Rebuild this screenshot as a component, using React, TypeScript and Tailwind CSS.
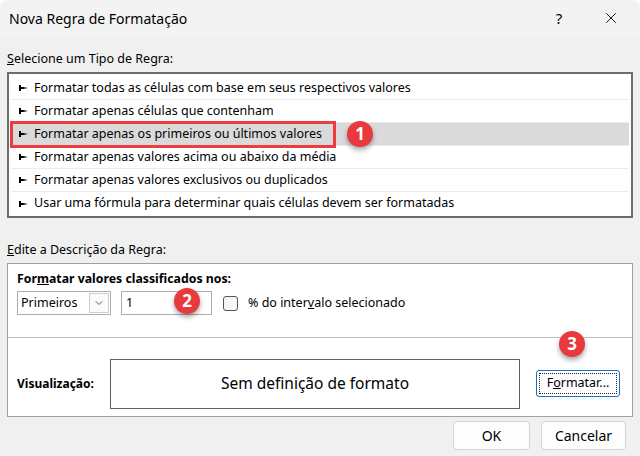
import { ChevronDown, X } from "lucide-react";

const RULES = [
  "Formatar todas as células com base em seus respectivos valores",
  "Formatar apenas células que contenham",
  "Formatar apenas os primeiros ou últimos valores",
  "Formatar apenas valores acima ou abaixo da média",
  "Formatar apenas valores exclusivos ou duplicados",
  "Usar uma fórmula para determinar quais células devem ser formatadas",
];

function Badge({ n }: { n: number }) {
  return (
    <span className="flex h-[26px] w-[26px] items-center justify-center rounded-full bg-[#e8393d] text-[17px] font-bold text-white shadow-[0_3px_5px_rgba(0,0,0,0.35)]">
      {n}
    </span>
  );
}

function Arrow() {
  return (
    <svg width="11" height="8" viewBox="0 0 11 8" className="shrink-0">
      <path d="M0 1h2v2h2l5 1-5 1H2v2H0z" fill="#000" />
    </svg>
  );
}

export default function App() {
  return (
    <div
      className="h-[456px] w-[640px] overflow-hidden rounded-t-lg bg-[#f0f0f0] text-[12.5px] text-black"
      style={{ fontFamily: '"Noto Sans", "Liberation Sans", sans-serif' }}
    >
      {/* title bar */}
      <div className="flex h-[36px] items-center bg-[#f3f3f3] pl-[9px]">
        <span className="flex-1 text-[14px]">Nova Regra de Formatação</span>
        <span className="w-[46px] text-center text-[15px]">?</span>
        <span className="flex w-[58px] justify-center">
          <X size={18} strokeWidth={1.2} />
        </span>
      </div>

      <div className="px-[7px] pt-[13px]">
        <div className="mb-[3px] leading-[20px]">
          <span className="underline">S</span>elecione um Tipo de Regra:
        </div>

        <div className="w-[626px] border-2 border-[#6d6d6d] bg-white px-[2px] pt-[3px] pb-[1px]">
          {RULES.map((r, i) => (
            <div
              key={r}
              className={`relative flex h-[23px] items-center gap-[4px] border-b border-[#ececec] pl-[8px] last:border-b-0 ${
                i === 2 ? "bg-[#dadada]" : ""
              }`}
            >
              <Arrow />
              <span>{r}</span>
              {i === 2 && (
                <>
                  <span className="absolute left-[-1px] top-[-2px] block h-[27px] w-[326px] border-[3px] border-[#ec3c3f]" />
                  <span className="absolute left-[336px] top-[-2px]">
                    <Badge n={1} />
                  </span>
                </>
              )}
            </div>
          ))}
        </div>

        <div className="mt-[22px] mb-[3px] leading-[20px]">
          <span className="underline">E</span>dite a Descrição da Regra:
        </div>

        <div className="w-[626px] border border-[#a0a0a0] bg-white">
          <div className="px-[9px] pt-[5px] pb-[22px]">
            <div className="text-[12.3px] font-bold leading-[20px]">
              For<span className="underline">m</span>atar valores classificados nos:
            </div>
            <div className="mt-[2px] flex items-center">
              <div className="flex h-[24px] w-[94px] items-center border border-[#adadad] pl-[3px]">
                <span className="flex-1">Primeiros</span>
                <span className="mr-[1px] flex h-[20px] w-[20px] items-center justify-center border border-[#cfcfcf] bg-[#fbfbfb]">
                  <ChevronDown size={12} strokeWidth={1.6} className="text-[#333]" />
                </span>
              </div>
              <div className="relative ml-[10px] flex h-[24px] w-[91px] items-center border border-[#adadad] pl-[4px]">
                1
                <span className="absolute left-[52px] top-[-4px]">
                  <Badge n={2} />
                </span>
              </div>
              <span className="ml-[11px] h-[15px] w-[15px] rounded-[3px] border border-[#555] bg-[#f6f6f6]" />
              <span className="ml-[10px]">
                % do inter<span className="underline">v</span>alo selecionado
              </span>
            </div>
          </div>
          <div className="relative flex h-[79px] items-start border-t border-[#c3c3c3] pl-[9px]">
            <span className="mt-[37px] w-[93px] text-[12px] font-bold">Visualização:</span>
            <div className="mt-[21px] flex h-[50px] w-[410px] items-center justify-center border border-[#5f5f5f] text-[15.5px]">
              Sem definição de formato
            </div>
            <div className="ml-[16px] mt-[32px] flex h-[27px] w-[84px] items-center justify-center rounded-[3px] border border-[#1a6fc9] p-[2px]">
              <span className="flex h-full w-full items-center justify-center border border-dotted border-[#222]">
                F<span className="underline">o</span>rmatar...
              </span>
            </div>
            <span className="absolute left-[551px] top-[-7px]">
              <Badge n={3} />
            </span>
          </div>
        </div>

        <div className="mt-[4px] flex justify-end gap-[11px] pr-[7px]">
          <button className="h-[29px] w-[77px] rounded-[4px] border border-[#d3d3d3] bg-[#fdfdfd] text-[14px]">
            OK
          </button>
          <button className="h-[29px] w-[85px] rounded-[4px] border border-[#d3d3d3] bg-[#fdfdfd] text-[14px]">
            Cancelar
          </button>
        </div>
      </div>
    </div>
  );
}
